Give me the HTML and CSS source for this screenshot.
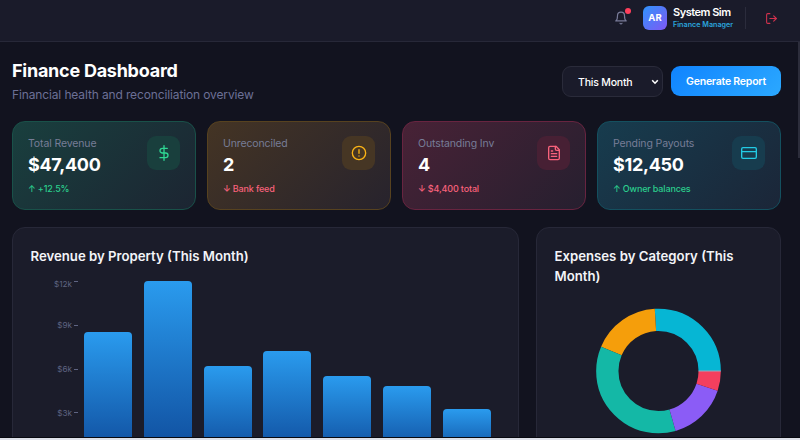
FILE: index.html
```
<!DOCTYPE html>
<html lang="en">

<head>
    <meta charset="utf-8">
    <meta name="viewport" content="width=device-width, initial-scale=1.0">
    <title>Finance Dashboard</title>
    <link rel="stylesheet" href="styles.css">
</head>

<body>
    <header class="topbar">
        <div class="bell">
            <svg class="icon" viewBox="0 0 24 24"><path d="M6 8a6 6 0 0 1 12 0c0 7 3 9 3 9H3s3-2 3-9" /><path d="M10.3 21a1.94 1.94 0 0 0 3.4 0" /></svg>
            <span class="dot"></span>
        </div>
        <div class="avatar">AR</div>
        <div class="user">
            <p class="user-name">System Sim</p>
            <p class="user-role">Finance Manager</p>
        </div>
        <div class="divider"></div>
        <svg class="icon logout" viewBox="0 0 24 24"><path d="M9 21H5a2 2 0 0 1-2-2V5a2 2 0 0 1 2-2h4" /><path d="M16 17l5-5-5-5" /><path d="M21 12H9" /></svg>
    </header>

    <main>
        <div class="content">
            <section class="heading">
                <div>
                    <h1>Finance Dashboard</h1>
                    <p class="subtitle">Financial health and reconciliation overview</p>
                </div>
                <div class="actions">
                    <div class="period">
                        <span>This Month</span>
                        <svg viewBox="0 0 8 6"><path d="M1.2 1.3L4 4.2l2.8-2.9" /></svg>
                    </div>
                    <button class="report">Generate Report</button>
                </div>
            </section>

            <section class="stats">
                <article class="stat green">
                    <div>
                        <p class="label">Total Revenue</p>
                        <p class="value">$47,400</p>
                        <p class="trend up">↑ +12.5%</p>
                    </div>
                    <div class="badge">
                        <svg class="icon" viewBox="0 0 24 24"><path d="M12 1v22" /><path d="M17 5H9.5a3.5 3.5 0 0 0 0 7h5a3.5 3.5 0 0 1 0 7H6" /></svg>
                    </div>
                </article>
                <article class="stat amber">
                    <div>
                        <p class="label">Unreconciled</p>
                        <p class="value">2</p>
                        <p class="trend down">↓ Bank feed</p>
                    </div>
                    <div class="badge">
                        <svg class="icon" viewBox="0 0 24 24"><circle cx="12" cy="12" r="10" /><path d="M12 7v5.5" /><path d="M12 16.5h.01" /></svg>
                    </div>
                </article>
                <article class="stat rose">
                    <div>
                        <p class="label">Outstanding Inv</p>
                        <p class="value">4</p>
                        <p class="trend down">↓ $4,400 total</p>
                    </div>
                    <div class="badge">
                        <svg class="icon" viewBox="0 0 24 24"><path d="M15 2H6a2 2 0 0 0-2 2v16a2 2 0 0 0 2 2h12a2 2 0 0 0 2-2V7z" /><path d="M14 2v4a2 2 0 0 0 2 2h4" /><path d="M10 9H8" /><path d="M16 13H8" /><path d="M16 17H8" /></svg>
                    </div>
                </article>
                <article class="stat cyan">
                    <div>
                        <p class="label">Pending Payouts</p>
                        <p class="value">$12,450</p>
                        <p class="trend up">↑ Owner balances</p>
                    </div>
                    <div class="badge">
                        <svg class="icon" viewBox="0 0 24 24"><rect x="1" y="4" width="22" height="16" rx="2" /><path d="M1 10h22" /></svg>
                    </div>
                </article>
            </section>

            <section class="charts">
                <article class="panel">
                    <h2>Revenue by Property (This Month)</h2>
                    <div class="bar-chart">
                        <div class="axis">
                            <span class="top">$12k</span>
                            <span>$9k</span>
                            <span>$6k</span>
                            <span>$3k</span>
                        </div>
                        <div class="bars">
                            <div class="bar" style="height: 70.8%"></div>
                            <div class="bar" style="height: 100%"></div>
                            <div class="bar" style="height: 51.7%"></div>
                            <div class="bar" style="height: 60%"></div>
                            <div class="bar" style="height: 45.8%"></div>
                            <div class="bar" style="height: 40%"></div>
                            <div class="bar" style="height: 26.7%"></div>
                        </div>
                    </div>
                </article>
                <article class="panel">
                    <h2>Expenses by Category (This Month)</h2>
                    <!-- slices run counter-clockwise from 3 o'clock, in degrees -->
                    <svg class="donut" viewBox="0 0 126 126">
                        <g transform="translate(62.5 63) scale(1 -1)">
                            <circle r="51.2" pathLength="360" stroke="#06b6d4" stroke-dasharray="93.5 266.5" />
                            <circle r="51.2" pathLength="360" stroke="#f59e0b" stroke-dasharray="63.5 296.5" stroke-dashoffset="-93.5" />
                            <circle r="51.2" pathLength="360" stroke="#14b8a6" stroke-dasharray="129 231" stroke-dashoffset="-157" />
                            <circle r="51.2" pathLength="360" stroke="#8b5cf6" stroke-dasharray="55.5 304.5" stroke-dashoffset="-286" />
                            <circle r="51.2" pathLength="360" stroke="#f43f5e" stroke-dasharray="18.5 341.5" stroke-dashoffset="-341.5" />
                        </g>
                        <path class="seam" d="M102.5 63h22.3" />
                    </svg>
                </article>
            </section>
        </div>
        <div class="scrollbar"></div>
    </main>
    <footer></footer>
</body>

</html>
```
FILE: styles.css
```
* {
    box-sizing: border-box;
    margin: 0;
    padding: 0;
}

body {
    display: flex;
    flex-direction: column;
    height: 440px;
    overflow: hidden;
    background-color: #12131f;
    color: #fff;
    font-family: Inter, "Liberation Sans", sans-serif;
}

.icon {
    display: block;
    fill: none;
    stroke: currentColor;
    stroke-width: 2;
    stroke-linecap: round;
    stroke-linejoin: round;
}

/* top bar */
.topbar {
    display: flex;
    flex: none;
    align-items: center;
    justify-content: flex-end;
    height: 42px;
    padding: 0 22px 5px 0;
    background-color: #1a1b2a;
    border-bottom: 1px solid #272838;
}

.bell {
    position: relative;
    margin-right: 15px;
    color: #787b98;
}

.bell .icon {
    width: 14px;
    height: 14px;
}

.dot {
    position: absolute;
    top: -3px;
    right: -3px;
    width: 6px;
    height: 6px;
    border-radius: 50%;
    background-color: #ff3f5c;
}

.avatar {
    width: 24px;
    height: 24px;
    margin-right: 6px;
    border-radius: 6px;
    background: linear-gradient(135deg, #2f93fb, #8058f5);
    font-size: 9.5px;
    font-weight: 700;
    line-height: 24px;
    text-align: center;
}

.user {
    width: 61px;
    margin-right: 11px;
    white-space: nowrap;
}

.user-name {
    font-size: 11px;
    font-weight: 600;
    line-height: 13px;
    letter-spacing: -0.5px;
}

.user-role {
    color: #2ba5dd;
    font-size: 7.2px;
    font-weight: 600;
    line-height: 12px;
}

.divider {
    width: 1px;
    height: 22px;
    margin-right: 19px;
    background-color: #2b2c3c;
}

.logout {
    width: 13px;
    height: 13px;
    color: #d0324e;
}

/* page */
main {
    display: flex;
    flex: 1;
    min-height: 0;
    overflow: hidden;
}

.content {
    flex: 1;
    padding: 17px 17px 0 12px;
}

.scrollbar {
    width: 2px;
    height: 116px;
    background-color: #2c2d3b;
}

footer {
    flex: none;
    height: 3px;
    border-top: 1px solid #080910;
    background-color: #dfe2ea;
}

.heading {
    display: flex;
    justify-content: space-between;
    height: 62px;
}

h1 {
    font-size: 18px;
    font-weight: 700;
    line-height: 24px;
    letter-spacing: -0.25px;
}

.subtitle {
    color: #6c7096;
    font-size: 12px;
    line-height: 24px;
    letter-spacing: -0.13px;
}

.actions {
    display: flex;
    gap: 8px;
    padding-top: 7px;
}

.period {
    display: flex;
    align-items: center;
    justify-content: space-between;
    width: 101px;
    height: 31px;
    padding: 1px 3px 0 15px;
    border: 1px solid #2a2b3a;
    border-radius: 9px;
    background-color: #1a1b2a;
    font-size: 10.5px;
    font-weight: 500;
    letter-spacing: -0.2px;
}

.period svg {
    width: 8px;
    height: 6px;
    fill: none;
    stroke: #fff;
    stroke-width: 1.6;
}

.report {
    width: 110px;
    height: 30px;
    border: 0;
    border-radius: 9px;
    background: linear-gradient(135deg, #1084ff, #2ba8ff);
    color: #fff;
    font-family: inherit;
    font-size: 10.5px;
    font-weight: 600;
    letter-spacing: -0.22px;
}

/* stat cards */
.stats {
    display: grid;
    grid-template-columns: repeat(4, 1fr);
    gap: 11px;
    margin-bottom: 17px;
}

.stat {
    display: flex;
    justify-content: space-between;
    height: 89px;
    padding: 14px 15px;
    border: 1px solid;
    border-radius: 13px;
}

.label {
    color: #777d97;
    font-size: 10.5px;
    line-height: 16px;
    letter-spacing: -0.12px;
}

.value {
    font-size: 18px;
    font-weight: 700;
    line-height: 26px;
    letter-spacing: -0.3px;
}

.trend {
    margin-top: 4px;
    font-size: 9px;
    font-weight: 500;
    line-height: 14px;
    letter-spacing: -0.15px;
}

.up {
    color: #2bce8d;
}

.down {
    color: #f9627b;
}

.badge {
    display: flex;
    align-items: center;
    justify-content: center;
    width: 33px;
    height: 34px;
    border-radius: 9px;
}

.badge .icon {
    width: 16px;
    height: 16px;
}

.green {
    border-color: #195149;
    background: linear-gradient(135deg, #193f3e, #1c2532);
}

.green .badge {
    background-color: #193f3d;
    color: #2fd693;
}

.amber {
    border-color: #57421f;
    background: linear-gradient(135deg, #443424, #27232d);
}

.amber .badge {
    background-color: #463624;
    color: #fbb416;
}

.rose {
    border-color: #682440;
    background: linear-gradient(135deg, #482236, #261f2f);
}

.rose .badge {
    background-color: #472034;
    color: #f9627b;
}

.cyan {
    border-color: #14505f;
    background: linear-gradient(135deg, #173c4e, #1b2638);
}

.cyan .badge {
    background-color: #173c4e;
    color: #23cbe5;
}

/* charts */
.charts {
    display: grid;
    grid-template-columns: 507px 1fr;
    gap: 17px;
}

.panel {
    height: 260px;
    padding: 18px 17px 0;
    border: 1px solid #272838;
    border-radius: 13px;
    background-color: #1b1c2a;
}

h2 {
    padding-left: 0.5px;
    color: #f3f4f8;
    font-size: 13.2px;
    font-weight: 600;
    line-height: 20px;
}

.bar-chart {
    display: flex;
    gap: 6px;
    height: 175.2px;
    margin-top: 15px;
}

.axis {
    width: 48px;
    color: #5f6482;
    font-size: 8.2px;
}

.axis span {
    display: flex;
    align-items: center;
    justify-content: flex-end;
    gap: 2px;
    height: 43.8px;
}

.axis span::after {
    content: "";
    width: 4px;
    height: 1px;
    background-color: #5f6482;
}

.axis .top {
    align-items: flex-start;
    height: 22.4px;
    line-height: 6px;
}

.bars {
    display: grid;
    grid-template-columns: repeat(7, 48px);
    gap: 11.8px;
    align-items: end;
}

.bar {
    border-radius: 4px 4px 0 0;
    background: linear-gradient(#2a9bee, #0f4c9c);
}

.donut {
    display: block;
    width: 126px;
    height: 126px;
    margin: 22px auto 0;
}

.donut circle {
    fill: none;
    stroke-width: 22.3;
}

.seam {
    stroke: #9aa9bd;
    stroke-width: 1;
}
```
